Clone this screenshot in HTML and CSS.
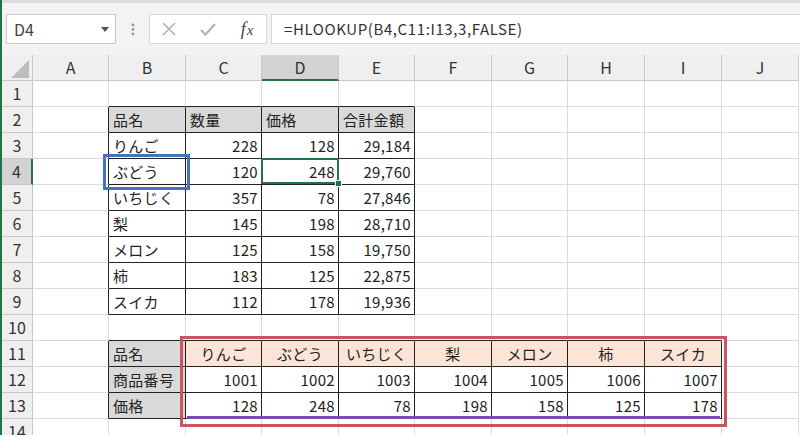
FILE: index.html
```html
<!DOCTYPE html>
<html lang="ja">
<head>
<meta charset="utf-8">
<link rel="stylesheet" href="styles.css">
</head>
<body>
<div class="app">
  <div class="toolbar">
    <div class="namebox"><span>D4</span><svg width="8" height="5" viewBox="0 0 8 5"><path d="M0 0H8L4 5Z" fill="#555"/></svg></div>
    <div class="dots"><svg width="4" height="13" viewBox="0 0 4 13"><circle cx="2" cy="2" r="1.4" fill="#9a9a9a"/><circle cx="2" cy="6.5" r="1.4" fill="#9a9a9a"/><circle cx="2" cy="11" r="1.4" fill="#9a9a9a"/></svg></div>
    <div class="fxbox">
      <span class="ic"><svg width="14" height="14" viewBox="0 0 14 14"><path d="M1 1L13 13M13 1L1 13" stroke="#b0b0b0" stroke-width="1.5" fill="none"/></svg></span>
      <span class="ic"><svg width="16" height="13" viewBox="0 0 16 13"><path d="M1 7L5.5 11.5L15 1" stroke="#b0b0b0" stroke-width="2" fill="none"/></svg></span>
      <span class="ic"><span class="fx"><i>f</i><i class="x">x</i></span></span>
    </div>
    <div class="formula">=HLOOKUP(B4,C11:I13,3,FALSE)</div>
  </div>
  <div class="sheet">
    <div class="grid">
      <div class="corner"><svg width="31" height="26" viewBox="0 0 31 26"><path d="M27 5V23H9Z" fill="#bdbdbd"/></svg></div>
      <div class="ch">A</div><div class="ch">B</div><div class="ch">C</div><div class="ch on">D</div><div class="ch">E</div><div class="ch">F</div><div class="ch">G</div><div class="ch">H</div><div class="ch">I</div><div class="ch">J</div>

      <div class="rh">1</div>
      <div class="c"></div><div class="c bkB"></div><div class="c bkB"></div><div class="c bkB"></div><div class="c bkB"></div><div class="c"></div><div class="c"></div><div class="c"></div><div class="c"></div><div class="c"></div>

      <div class="rh">2</div>
      <div class="c bkR"></div><div class="t th">品名</div><div class="t th">数量</div><div class="t th">価格</div><div class="t th">合計金額</div><div class="c"></div><div class="c"></div><div class="c"></div><div class="c"></div><div class="c"></div>

      <div class="rh">3</div>
      <div class="c bkR"></div><div class="t">りんご</div><div class="t n">228</div><div class="t n">128</div><div class="t n">29,184</div><div class="c"></div><div class="c"></div><div class="c"></div><div class="c"></div><div class="c"></div>

      <div class="rh on">4</div>
      <div class="c bkR"></div><div class="t">ぶどう</div><div class="t n">120</div><div class="t n sel">248</div><div class="t n">29,760</div><div class="c"></div><div class="c"></div><div class="c"></div><div class="c"></div><div class="c"></div>

      <div class="rh">5</div>
      <div class="c bkR"></div><div class="t">いちじく</div><div class="t n">357</div><div class="t n">78</div><div class="t n">27,846</div><div class="c"></div><div class="c"></div><div class="c"></div><div class="c"></div><div class="c"></div>

      <div class="rh">6</div>
      <div class="c bkR"></div><div class="t">梨</div><div class="t n">145</div><div class="t n">198</div><div class="t n">28,710</div><div class="c"></div><div class="c"></div><div class="c"></div><div class="c"></div><div class="c"></div>

      <div class="rh">7</div>
      <div class="c bkR"></div><div class="t">メロン</div><div class="t n">125</div><div class="t n">158</div><div class="t n">19,750</div><div class="c"></div><div class="c"></div><div class="c"></div><div class="c"></div><div class="c"></div>

      <div class="rh">8</div>
      <div class="c bkR"></div><div class="t">柿</div><div class="t n">183</div><div class="t n">125</div><div class="t n">22,875</div><div class="c"></div><div class="c"></div><div class="c"></div><div class="c"></div><div class="c"></div>

      <div class="rh">9</div>
      <div class="c bkR"></div><div class="t">スイカ</div><div class="t n">112</div><div class="t n">178</div><div class="t n">19,936</div><div class="c"></div><div class="c"></div><div class="c"></div><div class="c"></div><div class="c"></div>

      <div class="rh">10</div>
      <div class="c"></div><div class="c bkB"></div><div class="c bkB"></div><div class="c bkB"></div><div class="c bkB"></div><div class="c bkB"></div><div class="c bkB"></div><div class="c bkB"></div><div class="c bkB"></div><div class="c"></div>

      <div class="rh">11</div>
      <div class="c bkR"></div><div class="t th">品名</div><div class="t pk">りんご</div><div class="t pk">ぶどう</div><div class="t pk">いちじく</div><div class="t pk">梨</div><div class="t pk">メロン</div><div class="t pk">柿</div><div class="t pk">スイカ</div><div class="c"></div>

      <div class="rh">12</div>
      <div class="c bkR"></div><div class="t th">商品番号</div><div class="t n">1001</div><div class="t n">1002</div><div class="t n">1003</div><div class="t n">1004</div><div class="t n">1005</div><div class="t n">1006</div><div class="t n">1007</div><div class="c"></div>

      <div class="rh">13</div>
      <div class="c bkR"></div><div class="t th">価格</div><div class="t n">128</div><div class="t n">248</div><div class="t n">78</div><div class="t n">198</div><div class="t n">158</div><div class="t n">125</div><div class="t n">178</div><div class="c"></div>

      <div class="rh">14</div>
      <div class="c"></div><div class="c"></div><div class="c"></div><div class="c"></div><div class="c"></div><div class="c"></div><div class="c"></div><div class="c"></div><div class="c"></div><div class="c"></div>
    </div>
    <div class="mark-blue"></div>
    <div class="mark-red"></div>
    <div class="mark-purple"></div>
  </div>
</div>
</body>
</html>
```
FILE: styles.css
```css
html, body {
  margin: 0;
  padding: 0;
  background: #fff;
  overflow: hidden;
}
body {
  font-family: "Noto Sans CJK JP", "Noto Sans", sans-serif;
  color: #222;
}
.app {
  width: 798px;
  height: 435px;
  border-left: 2px solid #217346;
  overflow: hidden;
}
.toolbar {
  height: 55px;
  box-sizing: border-box;
  background: #f3f3f3;
  border-top: 3px solid #dcdcdc;
  padding: 11px 0 0 4px;
  display: flex;
  align-items: flex-start;
}
.namebox {
  width: 110px;
  height: 30px;
  box-sizing: border-box;
  background: #fff;
  border: 1px solid #c9c9c9;
  display: flex;
  align-items: center;
  justify-content: space-between;
  padding: 0 6px 0 7px;
  font-size: 16px;
  color: #444;
}
.dots {
  width: 33px;
  height: 30px;
  display: flex;
  align-items: center;
  justify-content: center;
}
.fxbox {
  width: 118px;
  height: 30px;
  box-sizing: border-box;
  background: #fff;
  border: 1px solid #d6d6d6;
  display: grid;
  grid-template-columns: 38px 40px 38px;
  align-items: center;
}
.ic {
  display: flex;
  align-items: center;
  justify-content: center;
}
.fx {
  font-family: "Liberation Serif", serif;
  color: #444;
  font-size: 18px;
  line-height: 1;
  white-space: nowrap;
}
.fx .x {
  font-size: 15px;
  margin-left: 1px;
}
.formula {
  flex: 1;
  margin-left: 4px;
  height: 30px;
  box-sizing: border-box;
  background: #fff;
  border: 1px solid #d6d6d6;
  border-right: none;
  padding-left: 12px;
  font-size: 15px;
  letter-spacing: 0.6px;
  line-height: 28px;
  color: #333;
  white-space: nowrap;
}
.sheet {
  position: relative;
}
.grid {
  display: grid;
  grid-template-columns: 31px 76px 77px 76px 77px 76px 77px 76px 77px 77px 77px;
  grid-auto-rows: 26px;
  font-size: 15px;
}
.grid > div {
  box-sizing: border-box;
  border-right: 1px solid #dadada;
  border-bottom: 1px solid #dadada;
  line-height: 25px;
  white-space: nowrap;
  overflow: visible;
}
.corner {
  background: #efefef;
  border-right-color: #c8c8c8 !important;
  border-bottom-color: #c8c8c8 !important;
  line-height: 0 !important;
}
.ch {
  background: #efefef;
  border-right-color: #c8c8c8 !important;
  border-bottom-color: #c8c8c8 !important;
  text-align: center;
  color: #333;
  font-size: 16px;
}
.ch.on {
  background: #d3d3d3;
  border-bottom: 2px solid #217346 !important;
}
.rh {
  background: #efefef;
  border-right-color: #c8c8c8 !important;
  border-bottom-color: #c8c8c8 !important;
  text-align: center;
  color: #333;
  font-size: 16px;
}
.rh.on {
  background: #d3d3d3;
  border-right: 2px solid #217346 !important;
}
.grid > .bkR {
  border-right-color: #222;
}
.grid > .bkB {
  border-bottom-color: #222;
}
.grid > .t {
  border-right-color: #222;
  border-bottom-color: #222;
  padding: 0 4px;
  letter-spacing: 0.3px;
}
.grid > .th {
  background: #d9d9d9;
}
.grid > .pk {
  background: #fce4d6;
  text-align: center;
}
.grid > .n {
  text-align: right;
  padding-right: 3px;
}
.grid > .sel {
  position: relative;
}
.sel::after {
  content: "";
  position: absolute;
  left: -1px;
  top: -1px;
  right: -1px;
  bottom: 0;
  border: 2px solid #217346;
}
.sel::before {
  content: "";
  position: absolute;
  right: -4px;
  bottom: -3px;
  width: 5px;
  height: 5px;
  background: #217346;
  border: 1px solid #fff;
  z-index: 2;
}
.mark-blue {
  position: absolute;
  left: 101px;
  top: 99px;
  width: 87px;
  height: 36px;
  box-sizing: border-box;
  border: 3px solid #4472c4;
}
.mark-red {
  position: absolute;
  left: 178px;
  top: 281px;
  width: 547px;
  height: 91px;
  box-sizing: border-box;
  border: 3px solid #c9555f;
}
.mark-purple {
  position: absolute;
  left: 185px;
  top: 361px;
  width: 533px;
  height: 3px;
  background: #7a4cb6;
}
```
